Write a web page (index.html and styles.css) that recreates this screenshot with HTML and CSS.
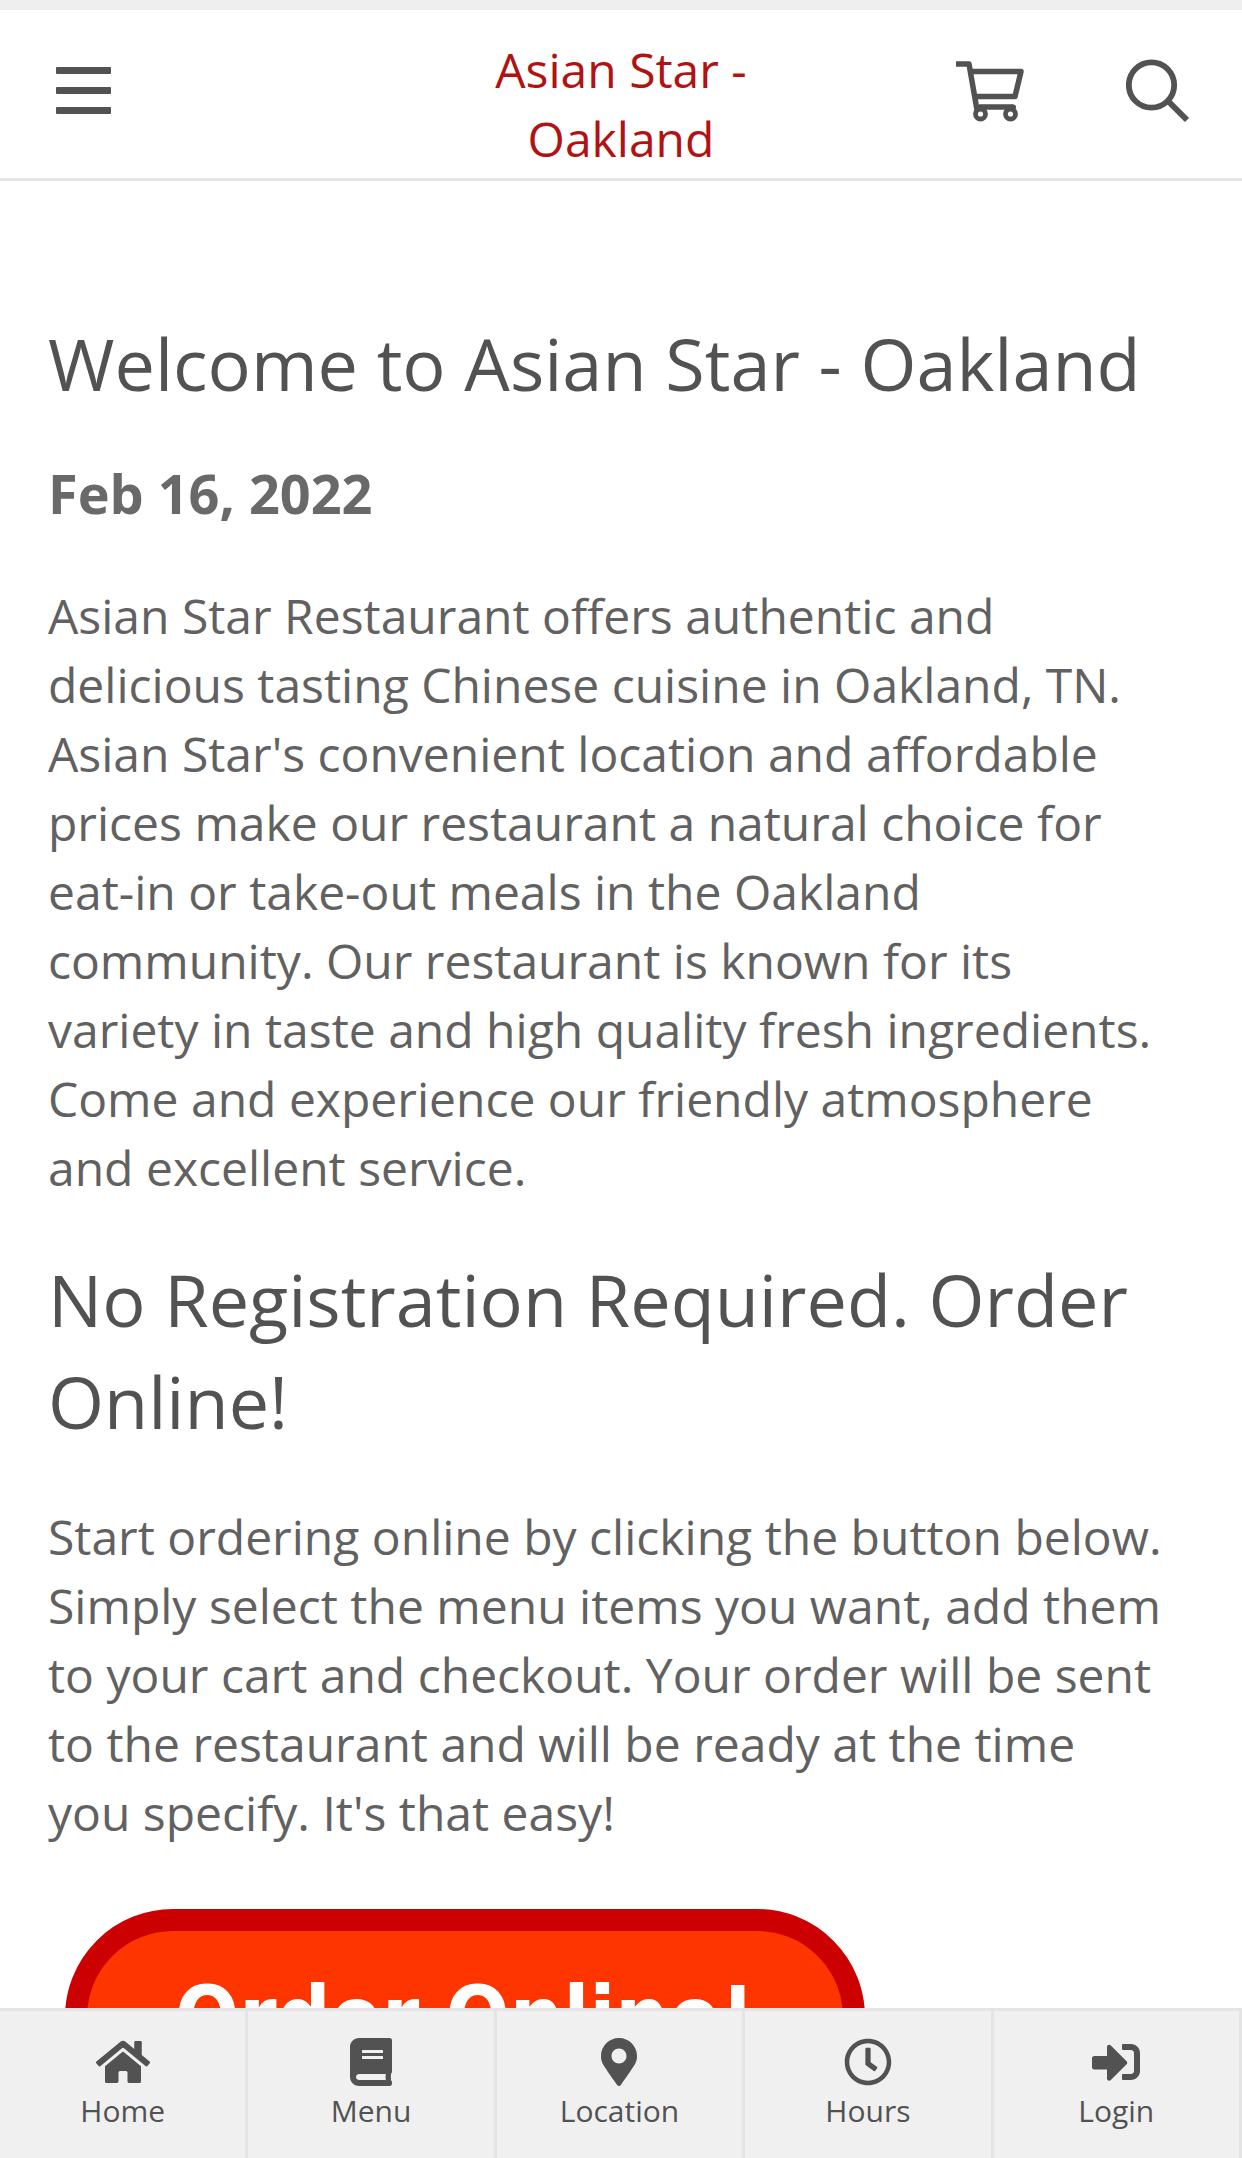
FILE: index.html
```html
<!DOCTYPE html>
<html lang="en">
<head>
  <meta charset="UTF-8">
  <meta name="viewport" content="width=device-width, initial-scale=1">
  <title>Asian Star - Oakland</title>
  <link rel="stylesheet" href="styles.css">
</head>
<body>
  <header class="header">
    <button class="icon-btn" type="button" aria-label="Open menu">
      <svg width="55" height="48" viewBox="0 0 55 48">
        <rect y="0" width="55" height="7" rx="1"/>
        <rect y="20" width="55" height="7" rx="1"/>
        <rect y="40" width="55" height="7" rx="1"/>
      </svg>
    </button>
    <a class="title" href="#">Asian Star - Oakland</a>
    <div class="actions">
      <a class="icon-btn" href="#" aria-label="Cart">
        <svg class="line" width="68" height="64" viewBox="0 0 68 64">
          <path d="M0 5h13l8 46M14 12.500h51l-6 25H19M23 48h34" stroke-width="5.500" stroke-linejoin="round"/>
          <path d="M56 48h1.500" stroke-width="5" stroke-linecap="round"/>
          <circle cx="24.500" cy="55" r="5" stroke-width="4.800"/>
          <circle cx="54.500" cy="55" r="5" stroke-width="4.800"/>
        </svg>
      </a>
      <button class="icon-btn" type="button" aria-label="Search">
        <svg class="line" width="64" height="64" viewBox="0 0 64 64">
          <circle cx="25.500" cy="26" r="22.700" stroke-width="5.800"/>
          <path d="M43 43l18 18" stroke-width="6"/>
        </svg>
      </button>
    </div>
  </header>

  <main class="content">
    <h1>Welcome to Asian Star - Oakland</h1>
    <h3>Feb 16, 2022</h3>
    <p>Asian Star Restaurant offers authentic and delicious tasting Chinese cuisine in Oakland, TN. Asian Star's convenient location and affordable prices make our restaurant a natural choice for eat-in or take-out meals in the Oakland community. Our restaurant is known for its variety in taste and high quality fresh ingredients. Come and experience our friendly atmosphere and excellent service.</p>
    <h2>No Registration Required. Order Online!</h2>
    <p>Start ordering online by clicking the button below. Simply select the menu items you want, add them to your cart and checkout. Your order will be sent to the restaurant and will be ready at the time you specify. It's that easy!</p>
    <a class="order-btn" href="#">Order Online!</a>
  </main>

  <nav class="tabs">
    <a href="#">
      <svg width="54" height="48" viewBox="0 0 576 512"><path d="M280.370 148.260L96 300.110V464a16 16 0 0 0 16 16l112.060-.29a16 16 0 0 0 15.920-16V368a16 16 0 0 1 16-16h64a16 16 0 0 1 16 16v95.640a16 16 0 0 0 16 16.050L464 480a16 16 0 0 0 16-16V300L295.670 148.260a12.190 12.190 0 0 0-15.300 0zM571.600 251.470L488 182.560V44.050a12 12 0 0 0-12-12h-56a12 12 0 0 0-12 12v72.610L318.470 43a48 48 0 0 0-61 0L4.340 251.470a12 12 0 0 0-1.600 16.900l25.500 31A12 12 0 0 0 45.150 301l235.220-193.740a12.190 12.190 0 0 1 15.300 0L530.900 301a12 12 0 0 0 16.900-1.600l25.500-31a12 12 0 0 0-1.700-16.930z"/></svg>
      Home
    </a>
    <a href="#">
      <svg width="42" height="48" viewBox="0 0 448 512"><path d="M448 360V24c0-13.300-10.700-24-24-24H96C43 0 0 43 0 96v320c0 53 43 96 96 96h328c13.300 0 24-10.700 24-24v-16c0-7.500-3.500-14.300-8.900-18.700-4.200-15.400-4.200-59.300 0-74.700 5.400-4.300 8.900-11.100 8.900-18.600zM128 134c0-3.300 2.700-6 6-6h212c3.300 0 6 2.700 6 6v20c0 3.300-2.700 6-6 6H134c-3.300 0-6-2.700-6-6v-20zm0 64c0-3.300 2.700-6 6-6h212c3.300 0 6 2.700 6 6v20c0 3.300-2.700 6-6 6H134c-3.300 0-6-2.700-6-6v-20zm253.400 250H96c-17.700 0-32-14.300-32-32 0-17.600 14.400-32 32-32h285.400c-1.900 17.100-1.900 46.900 0 64z"/></svg>
      Menu
    </a>
    <a href="#">
      <svg width="36" height="48" viewBox="0 0 384 512"><path d="M172.268 501.670C26.970 291.031 0 269.413 0 192 0 85.961 85.961 0 192 0s192 85.961 192 192c0 77.413-26.970 99.031-172.268 309.670-9.535 13.774-29.930 13.773-39.464 0zM192 272c44.183 0 80-35.817 80-80s-35.817-80-80-80-80 35.817-80 80 35.817 80 80 80z"/></svg>
      Location
    </a>
    <a href="#">
      <svg width="48" height="48" viewBox="0 0 512 512"><path d="M256 8C119 8 8 119 8 256s111 248 248 248 248-111 248-248S393 8 256 8zm0 448c-110.500 0-200-89.500-200-200S145.500 56 256 56s200 89.500 200 200-89.500 200-200 200zm61.800-104.400l-84.900-61.700c-3.100-2.300-4.900-5.900-4.900-9.700V116c0-6.600 5.400-12 12-12h32c6.600 0 12 5.400 12 12v141.700l66.800 48.600c5.400 3.900 6.500 11.400 2.600 16.800L334.600 349c-3.900 5.300-11.400 6.500-16.800 2.600z"/></svg>
      Hours
    </a>
    <a href="#">
      <svg width="48" height="48" viewBox="0 0 512 512"><path d="M416 448h-84c-6.600 0-12-5.400-12-12v-40c0-6.600 5.400-12 12-12h84c17.700 0 32-14.300 32-32V160c0-17.700-14.300-32-32-32h-84c-6.600 0-12-5.400-12-12V76c0-6.600 5.400-12 12-12h84c53 0 96 43 96 96v192c0 53-43 96-96 96zm-47-201L201 79c-15-15-41-4.500-41 17v96H24c-13.300 0-24 10.700-24 24v96c0 13.300 10.700 24 24 24h136v96c0 21.500 26 32 41 17l168-168c9.300-9.400 9.300-24.600 0-34z"/></svg>
      Login
    </a>
  </nav>
</body>
</html>
```
FILE: styles.css
```css
* {
  box-sizing: border-box;
}
body {
  margin: 0;
  height: 100vh;
  display: flex;
  flex-direction: column;
  border-top: 10px solid #efefef;
  background: white;
  color: #616161;
  font-family: "Open Sans", sans-serif;
  font-size: 48px;
  line-height: 69px;
}
a {
  text-decoration: none;
}
svg {
  display: block;
  fill: #525252;
}
svg.line {
  fill: none;
  stroke: #525252;
}

/* header */
.header {
  display: grid;
  grid-template-columns: 1fr 1fr 1fr;
  padding: 25px 0 5px;
  border-bottom: 3px solid #e4e4e4;
}
.title {
  color: #b11212;
  text-align: center;
}
.icon-btn {
  padding: 0;
  border: none;
  background: none;
  cursor: pointer;
}
.header > .icon-btn {
  justify-self: start;
  align-self: start;
  margin: 32px 56px;
}
.actions {
  display: flex;
  justify-content: flex-end;
  align-items: flex-start;
  gap: 102px;
  padding: 24px 52px 0 0;
}

/* content */
.content {
  flex: 1;
  min-height: 0;
  overflow-y: auto;
  scrollbar-width: none;
  padding: 131px 76px 48px 48px;
}
h1, h2 {
  color: #525252;
  font-size: 72px;
  font-weight: 400;
  line-height: 102px;
  margin: 0 0 40px;
}
h2 {
  margin-bottom: 50px;
}
h3 {
  color: #696969;
  font-size: 54px;
  font-weight: 700;
  line-height: 78px;
  margin: 0 0 49px;
}
p {
  margin: 0 0 46px;
}
.order-btn {
  display: block;
  width: 800px;
  max-width: 100%;
  margin: 62px 17px 0;
  padding: 36px 0;
  border: 22px solid #cc0000;
  border-radius: 112px;
  background: #ff3500;
  color: white;
  font-family: "DejaVu Sans Condensed", "DejaVu Sans", sans-serif;
  font-size: 84px;
  font-weight: 700;
  line-height: 100px;
  text-align: center;
}

/* bottom tabs */
.tabs {
  display: grid;
  grid-template-columns: repeat(5, 1fr);
  border-top: 3px solid #e4e4e4;
  background: #f0f0f0;
}
.tabs a {
  display: flex;
  flex-direction: column;
  align-items: center;
  gap: 4px;
  padding: 27px 0 26px;
  border-right: 3px solid #e4e4e4;
  color: #525252;
  font-size: 30px;
  line-height: 42px;
}
```
